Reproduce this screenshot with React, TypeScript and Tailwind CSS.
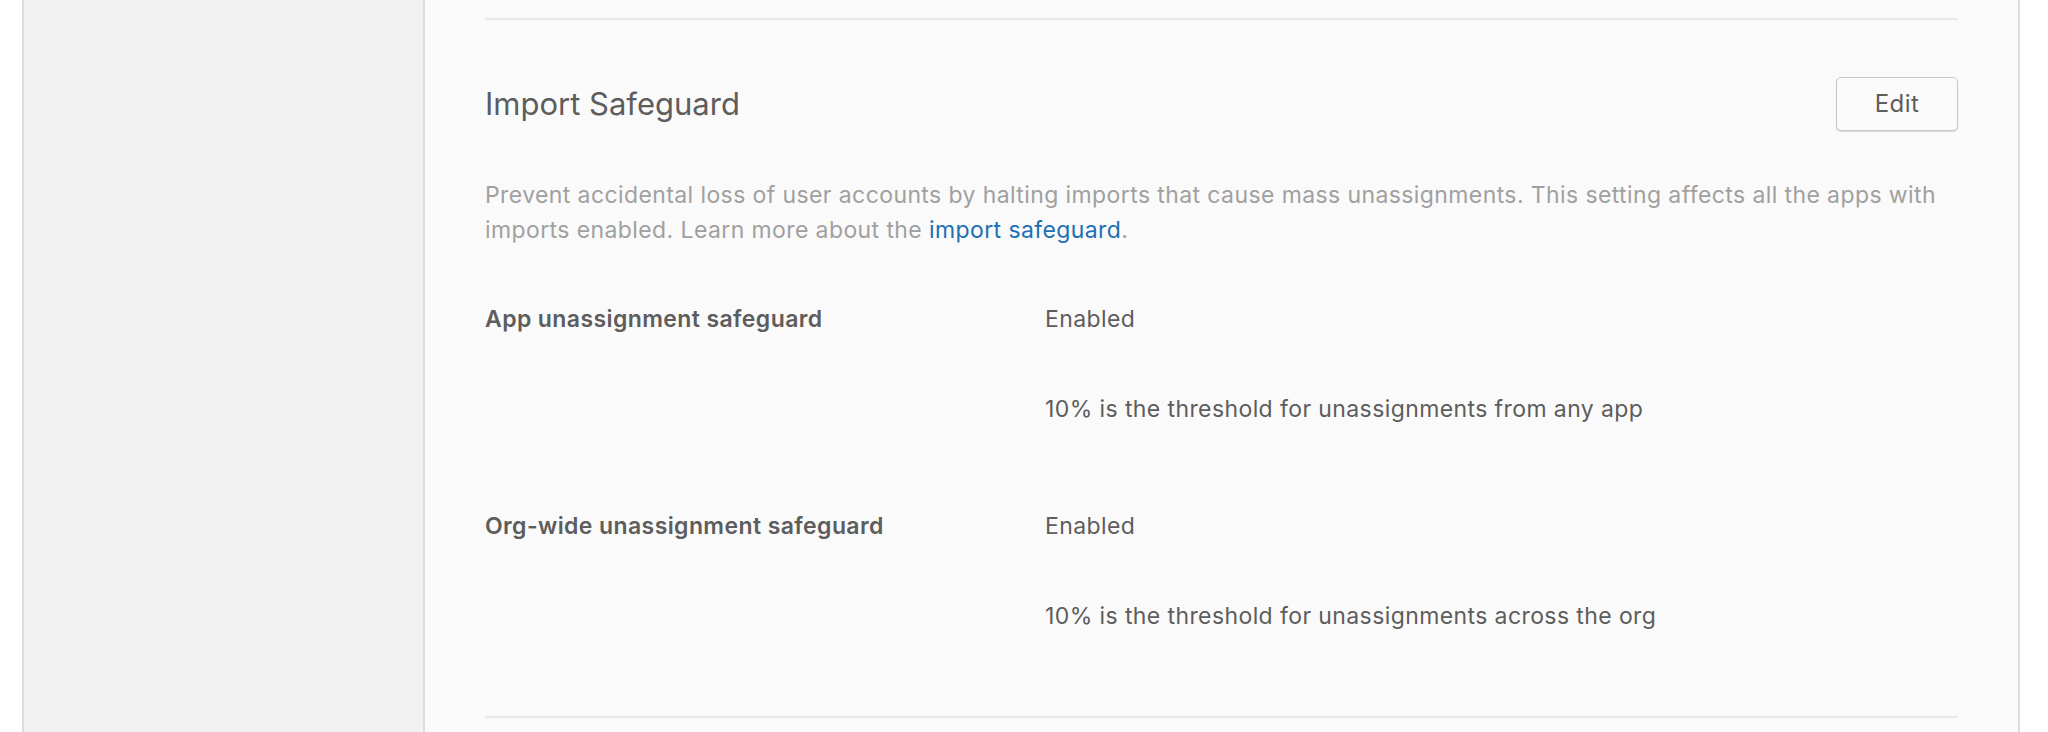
import React from "react";

const font = { fontFamily: "Inter, 'Open Sans', sans-serif" };

function Row({ label, values }: { label: string; values: string[] }) {
  return (
    <div className="flex pb-[82px]">
      <div className="w-[560px] shrink-0 text-[23px] leading-[35px] tracking-[0.4px] font-semibold text-[#5d5d5d]">{label}</div>
      <div className="flex flex-col gap-[55px] text-[23px] leading-[35px] tracking-[0.4px] text-[#5d5d5d]">
        {values.map((v) => (
          <div key={v}>{v}</div>
        ))}
      </div>
    </div>
  );
}

export default function App() {
  return (
    <div className="w-[2048px] h-[732px] overflow-hidden bg-white flex" style={font}>
      <div className="w-[22px] shrink-0 bg-white" />
      <div className="w-[403px] shrink-0 bg-[#f1f1f1] border-l-2 border-r-2 border-[#dcdcdc]" />
      <div className="w-[1595px] shrink-0 bg-[#fafafa] border-r-2 border-[#dcdcdc] px-[60px] pt-[18px]">
        <div className="h-[2px] bg-[#e8e8e8]" />
        <div className="mt-[57px] flex items-center justify-between h-[54px]">
          <h2 className="text-[31px] leading-[40px] text-[#5d5d5d] font-normal">Import Safeguard</h2>
          <button className="w-[122px] h-[54px] rounded-[5px] border border-[#c8c8c8] bg-[#fbfbfb] shadow-[0_1px_1px_rgba(0,0,0,0.15)] text-[24px] tracking-[0.4px] text-[#5d5d5d]">
            Edit
          </button>
        </div>
        <p className="mt-[47px] text-[23px] leading-[35px] tracking-[0.4px] text-[#a0a0a0]">
          Prevent accidental loss of user accounts by halting imports that cause mass unassignments. This setting affects all the apps with
          <br />
          imports enabled. Learn more about the <a className="text-[#1d6fb3]">import safeguard</a>.
        </p>
        <div className="mt-[54px]">
          <Row label="App unassignment safeguard" values={["Enabled", "10% is the threshold for unassignments from any app"]} />
          <Row label="Org-wide unassignment safeguard" values={["Enabled", "10% is the threshold for unassignments across the org"]} />
        </div>
        <div className="h-[2px] bg-[#e8e8e8]" />
      </div>
    </div>
  );
}
